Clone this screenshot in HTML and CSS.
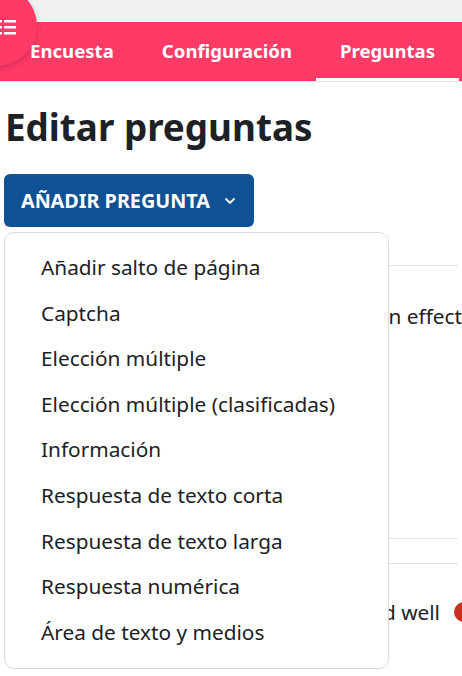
FILE: index.html
```html
<!DOCTYPE html>
<html lang="es">
<head>
    <meta charset="UTF-8">
    <meta name="viewport" content="width=device-width, initial-scale=1.0">
    <title>Editar preguntas</title>
    <link rel="stylesheet" href="styles.css">
</head>
<body>
    <div class="top-strip"></div>
    <button class="drawer-toggle" aria-label="Menú">
        <svg width="20" height="16" viewBox="0 0 20 16">
            <rect x="0" y="1" width="4" height="2.5" fill="#fff"/>
            <rect x="6" y="1" width="12" height="2.5" fill="#fff"/>
            <rect x="0" y="7" width="4" height="2.5" fill="#fff"/>
            <rect x="6" y="7" width="12" height="2.5" fill="#fff"/>
            <rect x="0" y="13" width="4" height="2.5" fill="#fff"/>
            <rect x="6" y="13" width="12" height="2.5" fill="#fff"/>
        </svg>
    </button>
    <nav class="tabs">
        <a class="tab">Encuesta</a>
        <a class="tab">Configuración</a>
        <a class="tab active">Preguntas</a>
    </nav>

    <main class="content">
        <h1>Editar preguntas</h1>

        <div class="add-question">
            <button class="add-btn">AÑADIR PREGUNTA
                <svg width="12" height="8" viewBox="0 0 12 8"><path d="M1.5 1.5 L6 6 L10.5 1.5" fill="none" stroke="#fff" stroke-width="1.8"/></svg>
            </button>
            <ul class="dropdown">
                <li>Añadir salto de página</li>
                <li>Captcha</li>
                <li>Elección múltiple</li>
                <li>Elección múltiple (clasificadas)</li>
                <li>Información</li>
                <li>Respuesta de texto corta</li>
                <li>Respuesta de texto larga</li>
                <li>Respuesta numérica</li>
                <li>Área de texto y medios</li>
            </ul>
        </div>

        <div class="questions">
            <div class="question q-tall">
                <p>n effect</p>
            </div>
            <div class="question q-short"></div>
            <div class="question q-last">
                <p>d well <span class="req"></span></p>
            </div>
            <div class="question-foot">Comentarios</div>
        </div>
    </main>
</body>
</html>
```

FILE: styles.css
```css
body {
    margin: 0;
    font-family: "Noto Sans", Arial, sans-serif;
    color: #1d2125;
    background: #fff;
    width: 462px;
    height: 676px;
    overflow: hidden;
    position: relative;
}

.top-strip {
    height: 22px;
    background-color: #f1f1f1;
}

.drawer-toggle {
    position: absolute;
    left: -43px;
    top: -14px;
    width: 80px;
    height: 80px;
    border-radius: 50%;
    border: none;
    background-color: #ff3a66;
    box-shadow: 0 2px 6px rgba(0, 0, 0, 0.18);
    z-index: 3;
    padding: 0;
}

.drawer-toggle svg {
    position: absolute;
    left: 41px;
    top: 33px;
}

.tabs {
    display: flex;
    height: 59px;
    background-color: #ff3a66;
    border-bottom: 1px solid #dee2e6;
    padding-left: 6px;
    white-space: nowrap;
}

.tab {
    display: flex;
    align-items: center;
    padding: 0 24px;
    color: #fff;
    font-weight: 700;
    font-size: 18.6px;
    border-bottom: 3px solid transparent;
    box-sizing: border-box;
}

.tab.active {
    border-bottom-color: #fff;
}

.content {
    padding: 0 4px;
}

h1 {
    margin: 20px 0 0 1px;
    font-size: 36.8px;
    font-weight: 700;
    line-height: 50px;
}

.add-question {
    position: relative;
    margin-top: 22px;
}

.add-btn {
    display: flex;
    align-items: center;
    gap: 14px;
    height: 53px;
    padding: 0 18px 0 17px;
    background-color: #0f5293;
    color: #fff;
    font-family: inherit;
    font-weight: 700;
    font-size: 19.8px;
    border: none;
    border-radius: 6px;
}

.dropdown {
    position: absolute;
    top: 58px;
    left: 0;
    width: 385px;
    margin: 0;
    padding: 12px 0 13px;
    list-style: none;
    background-color: #fff;
    border: 1px solid #dcdcdc;
    border-radius: 10px;
    box-sizing: border-box;
    z-index: 2;
}

.dropdown li {
    padding: 0 0 0 36px;
    height: 45.6px;
    line-height: 45.6px;
    font-size: 20.8px;
    white-space: nowrap;
}

.questions {
    margin-top: 38px;
}

.question {
    border-top: 1px solid #dee2e6;
    white-space: nowrap;
    font-size: 20.8px;
}

.question p {
    margin: 0;
    display: flex;
    justify-content: flex-end;
    align-items: center;
    gap: 14px;
}

.q-tall {
    height: 272px;
}

.q-tall p {
    padding-top: 36px;
    margin-right: -4px;
}

.q-short {
    height: 24px;
}

.q-last {
    height: 109px;
}

.q-last p {
    padding-top: 34px;
    margin-right: -16px;
}

.req {
    display: inline-block;
    width: 20px;
    height: 20px;
    border-radius: 50%;
    background-color: #ca3120;
}

.question-foot {
    padding-left: 29px;
    font-size: 20.8px;
}
```
